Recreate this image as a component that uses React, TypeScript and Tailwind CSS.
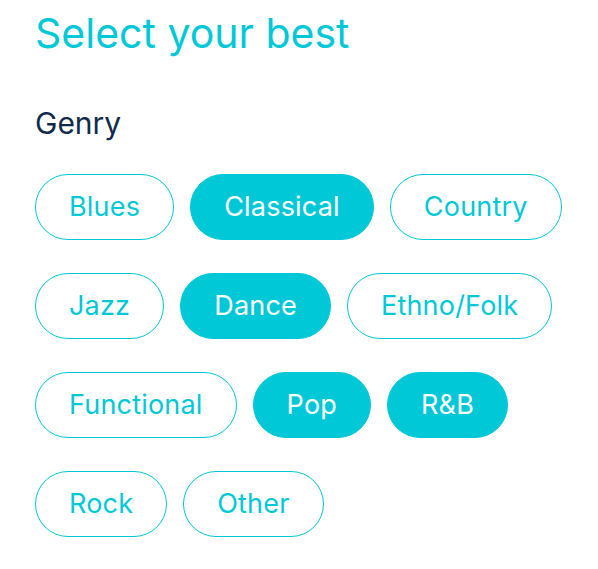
const genres = [
  { name: "Blues", active: false },
  { name: "Classical", active: true },
  { name: "Country", active: false },
  { name: "Jazz", active: false },
  { name: "Dance", active: true },
  { name: "Ethno/Folk", active: false },
  { name: "Functional", active: false },
  { name: "Pop", active: true },
  { name: "R&B", active: true },
  { name: "Rock", active: false },
  { name: "Other", active: false },
];

const App = () => {
  return (
    <div
      className="bg-white w-[598px] h-[569px] px-[35px] pt-[9px]"
      style={{ fontFamily: "Inter, sans-serif" }}
    >
      <h1 className="text-[41px] leading-[48px] text-[#00c8d7]">Select your best</h1>
      <h2 className="mt-[48px] text-[30px] leading-[36px] text-[#0f2a4b]">Genry</h2>
      <div className="mt-[33px] flex flex-wrap gap-x-4 gap-y-[33px] w-[530px]">
        {genres.map((g, key) => (
          <Pill key={key} name={g.name} active={g.active} />
        ))}
      </div>
    </div>
  );
};

const Pill = ({ name, active }: { name: string; active: boolean }) => {
  return (
    <div
      className={
        active
          ? "h-[66px] px-[33px] flex items-center rounded-full border-[1.5px] border-[#00c8d7] bg-[#00c8d7] text-white text-[27px] tracking-[0.2px]"
          : "h-[66px] px-[33px] flex items-center rounded-full border-[1.5px] border-[#00c8d7] bg-white text-[#00c8d7] text-[27px] tracking-[0.2px]"
      }
    >
      {name}
    </div>
  );
};

export default App;
